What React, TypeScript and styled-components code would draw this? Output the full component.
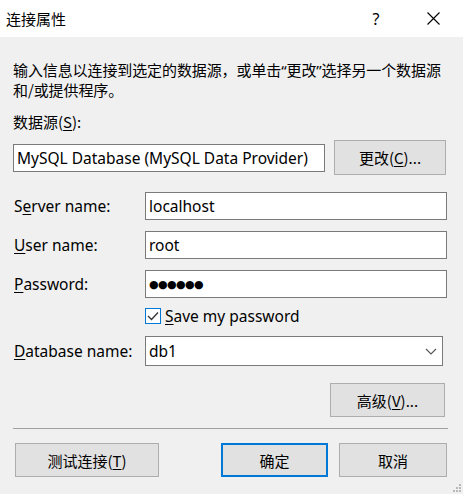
import React from "react";
import styled, { createGlobalStyle } from "styled-components";

const Global = createGlobalStyle`
  html, body { margin: 0; padding: 0; background: #f0f0f0; }
  body { font-family: "Noto Sans", "Noto Sans CJK SC", sans-serif; font-size: 15.5px; color: #000; }
  * { box-sizing: border-box; }
`;

const Dialog = styled.div`
  position: relative;
  width: 463px;
  height: 494px;
  background: #f0f0f0;
  display: flex;
  flex-direction: column;
  overflow: hidden;
`;

const TitleBar = styled.div`
  height: 37px;
  background: #fff;
  display: flex;
  align-items: center;
  padding-left: 6px;
  padding-right: 7px;
`;

const Title = styled.div`
  flex: 1;
  font-family: "Noto Sans CJK SC", sans-serif;
  font-size: 15px;
  line-height: 20px;
  margin-top: 1px;
`;

const TitleButton = styled.div<{ $w: number; $mr?: number }>`
  width: ${(p) => p.$w}px;
  margin-right: ${(p) => p.$mr ?? 0}px;
  height: 37px;
  display: flex;
  align-items: center;
  justify-content: center;
  font-size: 16px;
`;

const Content = styled.div`
  flex: 1;
  padding: 23px 16px 0 13px;
  display: flex;
  flex-direction: column;
`;

const Intro = styled.div`
  font-family: "Noto Sans CJK SC", sans-serif;
  font-size: 15px;
  line-height: 20px;
  white-space: nowrap;
  letter-spacing: -0.1px;
`;

const Quote = styled.span`
  font-family: "Noto Sans", sans-serif;
`;

const SectionLabel = styled.div`
  font-family: "Noto Sans CJK SC", sans-serif;
  font-size: 15px;
  margin-top: 12px;
  line-height: 20px;
`;

const SourceRow = styled.div`
  margin-top: 8px;
  display: flex;
  align-items: center;
  gap: 9px;
  height: 35px;
`;

const Box = styled.div<{ $h?: number; $w?: string; $mr?: number }>`
  height: ${(p) => p.$h ?? 28}px;
  width: ${(p) => p.$w ?? "auto"};
  margin-right: ${(p) => p.$mr ?? 0}px;
  background: #fff;
  border: 1px solid #7a7a7a;
  display: flex;
  align-items: center;
  padding-left: 3px;
  white-space: nowrap;
`;

const Button = styled.div<{ $w: number; $h?: number; $primary?: boolean; $mr?: number }>`
  width: ${(p) => p.$w}px;
  height: ${(p) => p.$h ?? 34}px;
  margin-right: ${(p) => p.$mr ?? 0}px;
  background: #e1e1e1;
  border: ${(p) => (p.$primary ? "2px solid #0078d7" : "1px solid #adadad")};
  display: flex;
  align-items: center;
  justify-content: center;
  font-family: "Noto Sans CJK SC", sans-serif;
  font-size: 15px;
  line-height: 17px;
  flex-shrink: 0;
`;

const Form = styled.div`
  margin-top: 17px;
  display: grid;
  grid-template-columns: 132px 1fr;
  row-gap: 11px;
  align-items: center;
`;

const FieldLabel = styled.div`
  padding-left: 1px;
  line-height: 20px;
  white-space: nowrap;
`;

const CheckRow = styled.div`
  grid-column: 2;
  display: flex;
  align-items: center;
  gap: 4px;
  height: 16px;
  margin-top: -1px;
  margin-bottom: 1px;
`;

const CheckBox = styled.div`
  width: 16px;
  height: 16px;
  border: 1px solid #0078d7;
  background: #fff;
  display: flex;
  align-items: center;
  justify-content: center;
`;

const Combo = styled(Box)`
  justify-content: space-between;
  padding-right: 5px;
`;

const Dots = styled.span`
  font-family: "DejaVu Sans", sans-serif;
  font-size: 11px;
  letter-spacing: -0.6px;
`;

const ButtonRowRight = styled.div`
  margin-top: 17px;
  display: flex;
  justify-content: flex-end;
`;

const Separator = styled.div`
  margin-top: 11px;
  height: 1px;
  background: #a0a0a0;
  margin-right: -1px;
`;

const BottomRow = styled.div`
  margin-top: 14px;
  display: flex;
  gap: 11px;
  padding-left: 2px;
`;

const Spacer = styled.div`
  flex: 1;
`;

const Grip = styled.svg`
  position: absolute;
  right: 2px;
  bottom: 2px;
`;

const U = styled.span`
  text-decoration: underline;
  text-underline-offset: 2px;
`;

export default function App() {
  return (
    <>
      <Global />
      <Dialog>
        <TitleBar>
          <Title>连接属性</Title>
          <TitleButton $w={30} $mr={20}>?</TitleButton>
          <TitleButton $w={45}>
            <svg width="13" height="13" viewBox="0 0 13 13">
              <path d="M0.5 0.5 L12.5 12.5 M12.5 0.5 L0.5 12.5" stroke="#000" strokeWidth="1.1" fill="none" />
            </svg>
          </TitleButton>
        </TitleBar>
        <Content>
          <Intro>
            输入信息以连接到选定的数据源，或单击<Quote>“</Quote>更改<Quote>”</Quote>选择另一个数据源
            <br />
            和/或提供程序。
          </Intro>
          <SectionLabel>
            数据源(<U>S</U>):
          </SectionLabel>
          <SourceRow>
            <Box $w="312px" $h={28}>MySQL Database (MySQL Data Provider)</Box>
            <Button $w={112} $h={35}>
              更改(<U>C</U>)...
            </Button>
          </SourceRow>
          <Form>
            <FieldLabel>
              S<U>e</U>rver name:
            </FieldLabel>
            <Box>localhost</Box>
            <FieldLabel>
              <U>U</U>ser name:
            </FieldLabel>
            <Box>root</Box>
            <FieldLabel>
              <U>P</U>assword:
            </FieldLabel>
            <Box>
              <Dots>●●●●●●</Dots>
            </Box>
            <CheckRow>
              <CheckBox>
                <svg width="12" height="10" viewBox="0 0 12 10">
                  <path d="M1 5 L4.5 8.5 L11 1.5" stroke="#333" strokeWidth="1.3" fill="none" />
                </svg>
              </CheckBox>
              <span>
                <U>S</U>ave my password
              </span>
            </CheckRow>
            <FieldLabel>
              <U>D</U>atabase name:
            </FieldLabel>
            <Combo $h={30} $mr={4}>
              <span>db1</span>
              <svg width="12" height="7" viewBox="0 0 12 7">
                <path d="M1 1 L6 6 L11 1" stroke="#555" strokeWidth="1.1" fill="none" />
              </svg>
            </Combo>
          </Form>
          <ButtonRowRight>
            <Button $w={115} $mr={2}>
              高级(<U>V</U>)...
            </Button>
          </ButtonRowRight>
          <Separator />
          <BottomRow>
            <Button $w={144}>
              测试连接(<U>T</U>)
            </Button>
            <Spacer />
            <Button $w={107} $primary>
              确定
            </Button>
            <Button $w={108}>取消</Button>
          </BottomRow>
        </Content>
        <Grip width="8" height="8" viewBox="0 0 8 8">
          <rect x="6" y="0" width="2" height="2" fill="#b8b8b8" />
          <rect x="3" y="3" width="2" height="2" fill="#b8b8b8" />
          <rect x="6" y="3" width="2" height="2" fill="#b8b8b8" />
          <rect x="0" y="6" width="2" height="2" fill="#b8b8b8" />
          <rect x="3" y="6" width="2" height="2" fill="#b8b8b8" />
          <rect x="6" y="6" width="2" height="2" fill="#b8b8b8" />
        </Grip>
      </Dialog>
    </>
  );
}
